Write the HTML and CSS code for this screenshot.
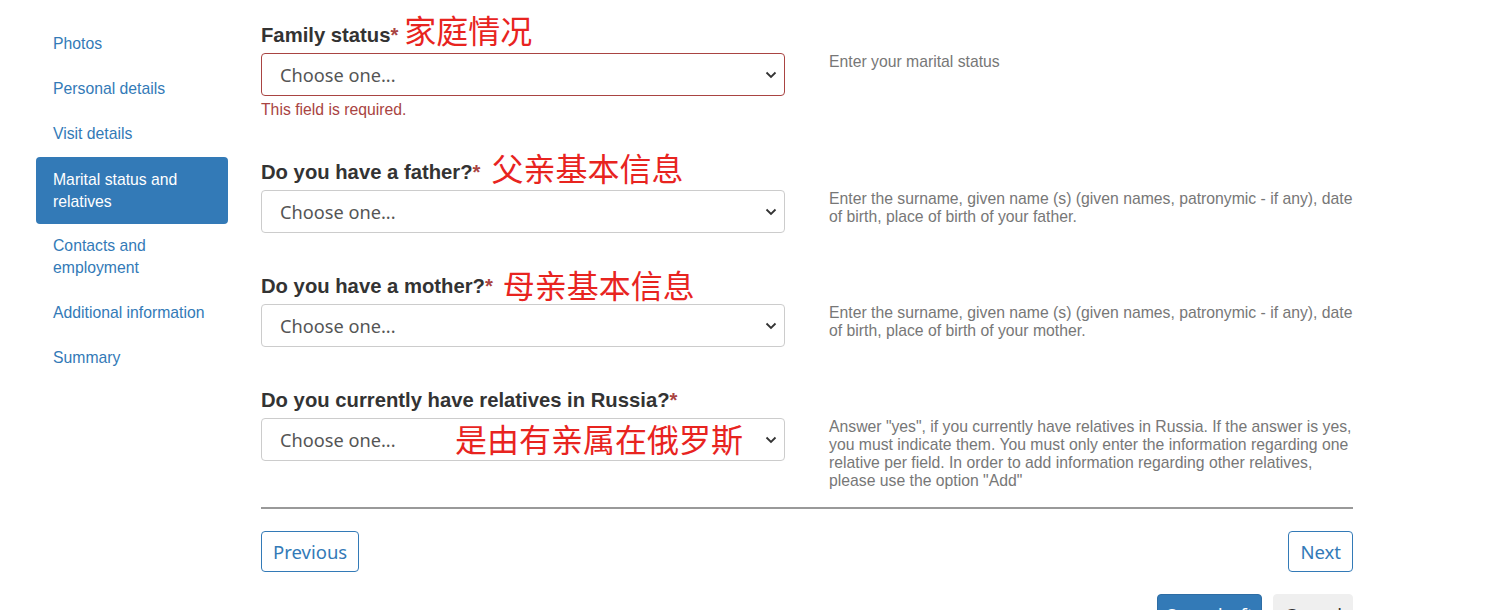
FILE: index.html
```html
<!DOCTYPE html>
<html lang="en">
<head>
<meta charset="utf-8">
<title>Marital status and relatives</title>
<link rel="stylesheet" href="styles.css">
</head>
<body>
<div class="page">
  <nav class="side">
    <a href="#" class="nav-item">Photos</a>
    <a href="#" class="nav-item">Personal details</a>
    <a href="#" class="nav-item">Visit details</a>
    <a href="#" class="nav-item active">Marital status and relatives</a>
    <a href="#" class="nav-item">Contacts and employment</a>
    <a href="#" class="nav-item">Additional information</a>
    <a href="#" class="nav-item">Summary</a>
  </nav>
  <main class="main">
    <div class="row">
      <label class="label">Family status<span class="req">*</span><span class="anchor"><span class="note note-1">家庭情况</span></span></label>
      <div class="field">
        <div class="select-wrap">
          <select class="select has-error"><option>Choose one...</option></select>
          <svg class="chev" width="12" height="8" viewBox="0 0 12 8"><path d="M1.5 1.5 L6 6 L10.5 1.5" fill="none" stroke="#333" stroke-width="1.8"/></svg>
        </div>
        <div class="error">This field is required.</div>
      </div>
      <div class="help">Enter your marital status</div>
    </div>
    <div class="row">
      <label class="label">Do you have a father?<span class="req">*</span><span class="anchor"><span class="note note-2">父亲基本信息</span></span></label>
      <div class="field">
        <div class="select-wrap">
          <select class="select"><option>Choose one...</option></select>
          <svg class="chev" width="12" height="8" viewBox="0 0 12 8"><path d="M1.5 1.5 L6 6 L10.5 1.5" fill="none" stroke="#333" stroke-width="1.8"/></svg>
        </div>
      </div>
      <div class="help">Enter the surname, given name (s) (given names, patronymic - if any), date of birth, place of birth of your father.</div>
    </div>
    <div class="row">
      <label class="label">Do you have a mother?<span class="req">*</span><span class="anchor"><span class="note note-3">母亲基本信息</span></span></label>
      <div class="field">
        <div class="select-wrap">
          <select class="select"><option>Choose one...</option></select>
          <svg class="chev" width="12" height="8" viewBox="0 0 12 8"><path d="M1.5 1.5 L6 6 L10.5 1.5" fill="none" stroke="#333" stroke-width="1.8"/></svg>
        </div>
      </div>
      <div class="help">Enter the surname, given name (s) (given names, patronymic - if any), date of birth, place of birth of your mother.</div>
    </div>
    <div class="row row-last">
      <label class="label">Do you currently have relatives in Russia?<span class="req">*</span></label>
      <div class="field">
        <div class="select-wrap">
          <select class="select"><option>Choose one...</option></select>
          <span class="note note-4">是由有亲属在俄罗斯</span>
          <svg class="chev" width="12" height="8" viewBox="0 0 12 8"><path d="M1.5 1.5 L6 6 L10.5 1.5" fill="none" stroke="#333" stroke-width="1.8"/></svg>
        </div>
      </div>
      <div class="help">Answer "yes", if you currently have relatives in Russia. If the answer is yes, you must indicate them. You must only enter the information regarding one relative per field. In order to add information regarding other relatives, please use the option "Add"</div>
    </div>
    <hr class="divider">
    <div class="pager">
      <button class="btn btn-outline">Previous</button>
      <button class="btn btn-outline">Next</button>
    </div>
    <div class="actions">
      <button class="btn btn-primary">Save draft</button>
      <button class="btn btn-default">Cancel</button>
    </div>
  </main>
</div>
</body>
</html>
```
FILE: styles.css
```css
html, body {
  margin: 0;
  padding: 0;
  background: #fff;
}
body {
  font-family: "Liberation Sans", Arial, sans-serif;
  color: #333;
  overflow: hidden;
}
.page {
  display: flex;
  align-items: flex-start;
}
.side {
  width: 192px;
  margin: 21px 0 0 36px;
  display: flex;
  flex-direction: column;
}
.nav-item {
  display: block;
  padding: 11.5px 17px;
  font-size: 15.75px;
  line-height: 22px;
  color: #337ab7;
  text-decoration: none;
  border-radius: 4px;
}
.nav-item.active {
  background: #337ab7;
  color: #fff;
  margin-top: 1px;
  margin-bottom: -1px;
}
.main {
  width: 1092px;
  margin-left: 33px;
  padding-top: 23px;
}
.row {
  display: grid;
  grid-template-columns: 524px 524px;
  column-gap: 44px;
  row-gap: 6px;
  margin-bottom: 41px;
}
.row-last {
  margin-bottom: 17px;
}
.label {
  grid-column: 1 / 3;
  grid-row: 1;
  font-size: 20.25px;
  font-weight: bold;
  line-height: 24px;
  color: #333;
  white-space: nowrap;
}
.req {
  color: #a94442;
}
.anchor {
  position: relative;
}
.note {
  position: absolute;
  white-space: nowrap;
  font-family: "Noto Sans CJK SC", sans-serif;
  font-weight: normal;
  font-size: 32px;
  line-height: 36px;
  color: #e8241f;
}
.note-1 { left: 6px; top: -13px; }
.note-2 { left: 11px; top: -12px; }
.note-3 { left: 10px; top: -9px; }
.note-4 {
  left: 194px;
  top: 2px;
  pointer-events: none;
}
.field {
  grid-column: 1;
  grid-row: 2;
}
.help {
  grid-column: 2;
  grid-row: 2;
  margin-top: 0;
  font-size: 15.75px;
  line-height: 18px;
  color: #777;
}
.select-wrap {
  position: relative;
  height: 43px;
}
.select {
  -webkit-appearance: none;
  appearance: none;
  width: 100%;
  height: 43px;
  box-sizing: border-box;
  margin: 0;
  padding: 0 40px 0 18px;
  border: 1px solid #ccc;
  border-radius: 4px;
  background: #fff;
  font-family: "Noto Sans", sans-serif;
  font-size: 18.2px;
  color: #555;
}
.select.has-error {
  border-color: #a94442;
}
.chev {
  position: absolute;
  right: 8px;
  top: 18px;
}
.error {
  margin-top: 5px;
  font-size: 15.75px;
  line-height: 18px;
  color: #a94442;
}
.divider {
  border: 0;
  height: 2px;
  margin: 0;
  background: #999;
}
.pager {
  display: flex;
  justify-content: space-between;
  margin-top: 22px;
}
.actions {
  display: flex;
  justify-content: flex-end;
  gap: 11px;
  margin-top: 22px;
}
.btn {
  font-family: "Noto Sans", sans-serif;
  font-size: 18.5px;
  line-height: 27px;
  padding: 6px 11px;
  border-radius: 4px;
  border: 1px solid transparent;
  background: #fff;
  cursor: pointer;
}
.btn-outline {
  border-color: #337ab7;
  color: #337ab7;
}
.btn-primary {
  background: #337ab7;
  border-color: #2e6da4;
  color: #fff;
  padding: 6px 8px;
}
.btn-default {
  background: #efefef;
  border-color: #efefef;
  color: #333;
  padding: 6px 10px;
}
```
